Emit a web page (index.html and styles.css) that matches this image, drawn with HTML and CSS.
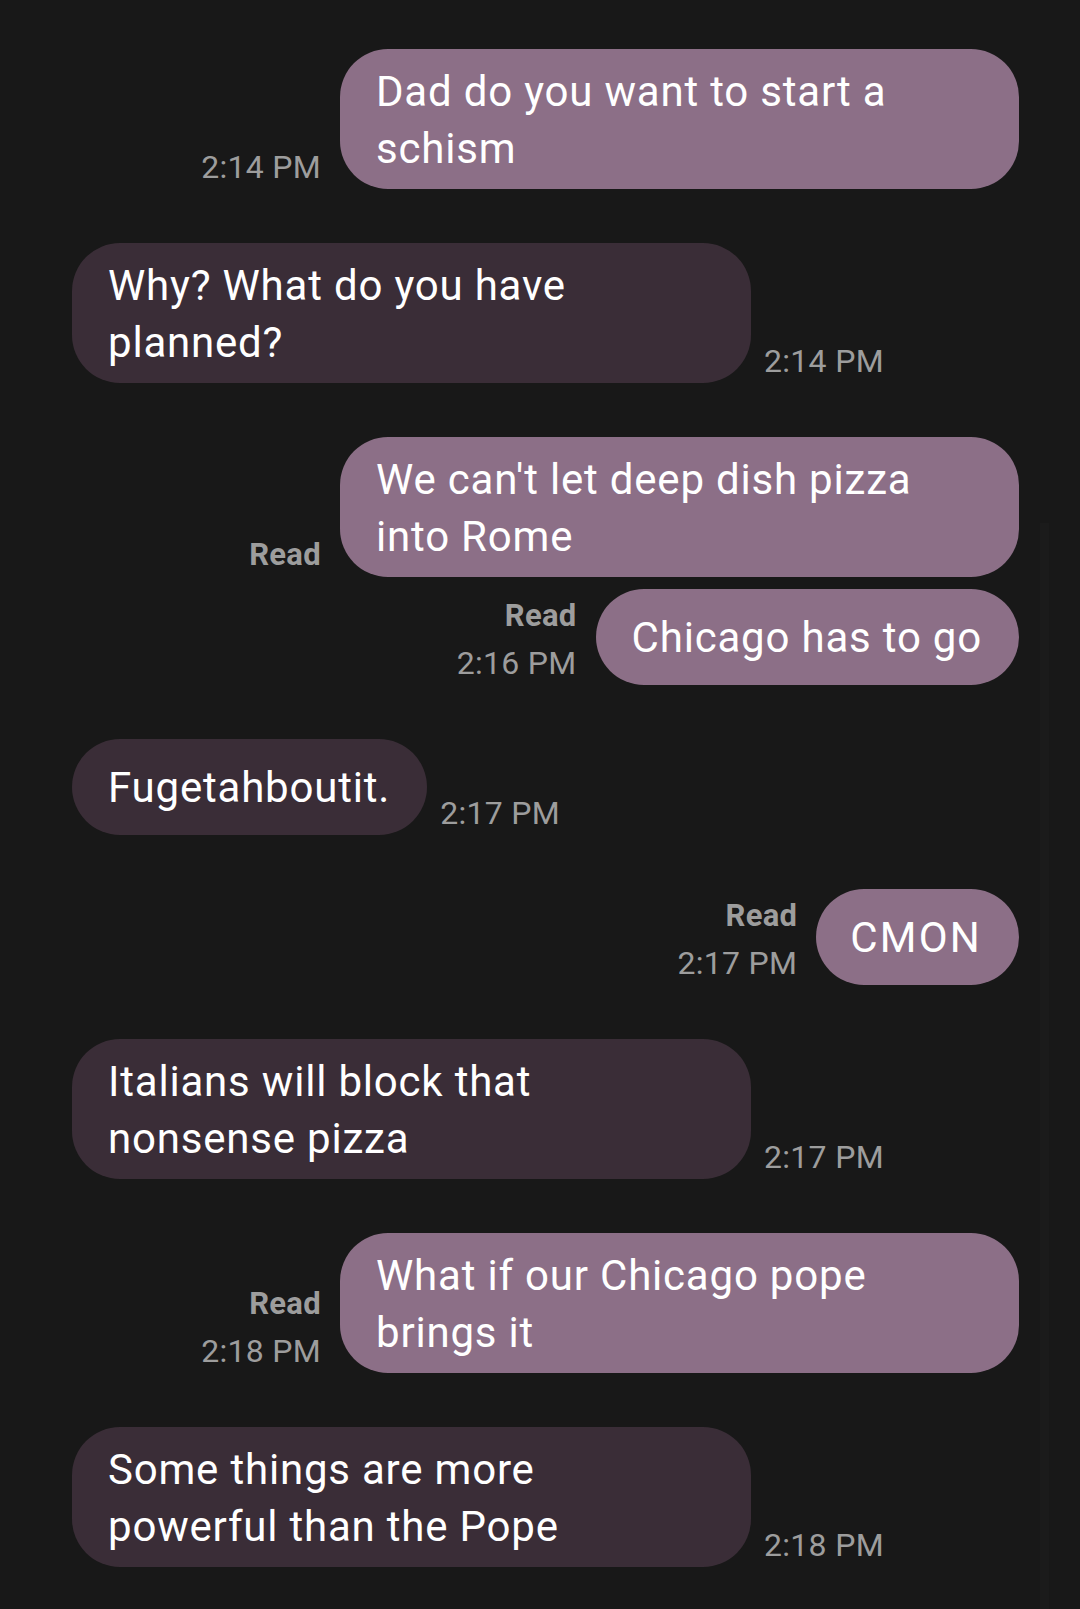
FILE: index.html
```html
<!DOCTYPE html>
<html lang="en">
<head>
<meta charset="utf-8">
<title>Messages</title>
<link rel="stylesheet" href="styles.css">
</head>
<body>
<main class="thread">
  <div class="row sent">
    <div class="meta"><span class="time">2:14 PM</span></div>
    <div class="bubble wide">Dad do you want to start a<br>schism</div>
  </div>

  <div class="row recv">
    <div class="bubble wide">Why? What do you have<br>planned?</div>
    <div class="meta"><span class="time">2:14 PM</span></div>
  </div>

  <div class="row sent">
    <div class="meta"><span class="read">Read</span></div>
    <div class="bubble wide">We can't let deep dish pizza<br>into Rome</div>
  </div>

  <div class="row sent grouped">
    <div class="meta"><span class="read">Read</span><span class="time">2:16 PM</span></div>
    <div class="bubble">Chicago has to go</div>
  </div>

  <div class="row recv">
    <div class="bubble">Fugetahboutit.</div>
    <div class="meta"><span class="time">2:17 PM</span></div>
  </div>

  <div class="row sent">
    <div class="meta"><span class="read">Read</span><span class="time">2:17 PM</span></div>
    <div class="bubble caps">CMON</div>
  </div>

  <div class="row recv">
    <div class="bubble wide">Italians will block that<br>nonsense pizza</div>
    <div class="meta"><span class="time">2:17 PM</span></div>
  </div>

  <div class="row sent">
    <div class="meta"><span class="read">Read</span><span class="time">2:18 PM</span></div>
    <div class="bubble wide">What if our Chicago pope<br>brings it</div>
  </div>

  <div class="row recv">
    <div class="bubble wide">Some things are more<br>powerful than the Pope</div>
    <div class="meta"><span class="time">2:18 PM</span></div>
  </div>
</main>
<div class="scrollbar"></div>
</body>
</html>
```
FILE: styles.css
```css
html, body {
  margin: 0;
  padding: 0;
  background: #181818;
}

body {
  position: relative;
  min-height: 1609px;
  font-family: Roboto, "Noto Sans", "Liberation Sans", sans-serif;
  color: #ffffff;
  overflow: hidden;
}

.thread {
  display: flex;
  flex-direction: column;
  gap: 54px;
  padding: 49px 61px 0 72px;
}

.row {
  display: flex;
  align-items: flex-end;
}

.row.grouped {
  margin-top: -42px;
}

.row.sent {
  justify-content: flex-end;
}

.row.recv {
  justify-content: flex-start;
}

.bubble {
  box-sizing: border-box;
  min-height: 96px;
  padding: 13px 37px 13px 36px;
  border-radius: 48px;
  font-size: 42px;
  line-height: 57px;
  letter-spacing: 0.8px;
  display: flex;
  align-items: center;
  white-space: nowrap;
}

.bubble.wide {
  width: 679px;
  display: block;
  white-space: normal;
  padding-top: 14px;
  padding-bottom: 12px;
}

.bubble.caps {
  letter-spacing: 2.2px;
  padding-left: 34px;
}

.sent .bubble {
  background: #8c6f87;
}

.recv .bubble {
  background: #3a2d37;
}

.meta {
  display: flex;
  flex-direction: column;
  color: #9d9d9d;
  padding-bottom: 1px;
}

.sent .meta {
  align-items: flex-end;
  margin-right: 19px;
}

.recv .meta {
  align-items: flex-start;
  margin-left: 13px;
}

.time {
  font-size: 32px;
  line-height: 42px;
  letter-spacing: 0.3px;
}

.read {
  font-size: 31px;
  line-height: 42px;
  font-weight: 700;
  letter-spacing: 0.3px;
}

.read + .time {
  margin-top: 5px;
}

.scrollbar {
  position: absolute;
  top: 523px;
  right: 31px;
  width: 9px;
  bottom: 0;
  background: #1b1b1b;
}
```
